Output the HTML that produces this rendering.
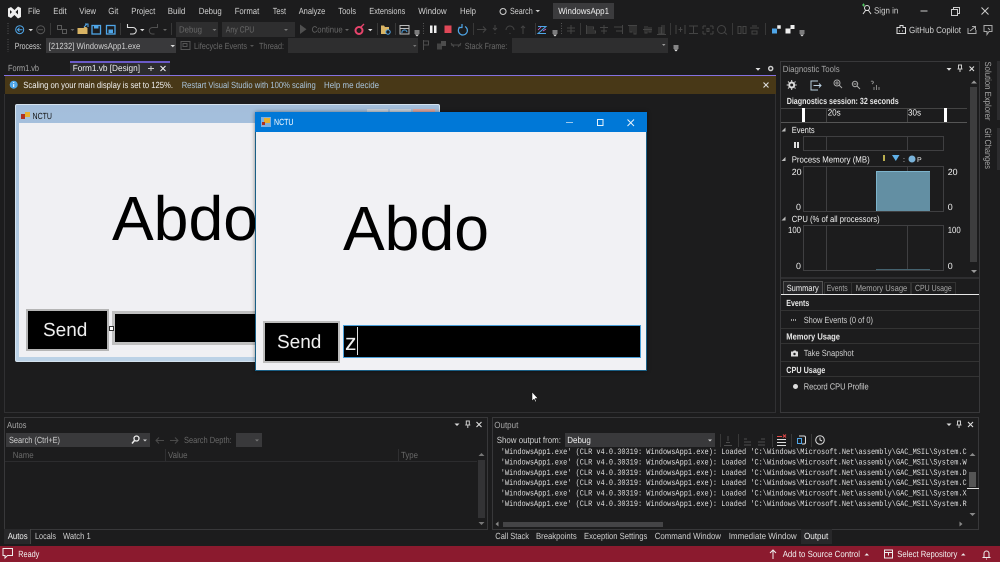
<!DOCTYPE html>
<html><head><meta charset="utf-8"><style>
html,body{margin:0;padding:0;background:#1b1b1c}
#r{position:relative;width:1000px;height:562px;overflow:hidden;background:#1c1c1d;font-family:"Liberation Sans",sans-serif;color:#d8d8d8;text-rendering:geometricPrecision}
.t{position:absolute;white-space:nowrap}
.b{position:absolute;box-sizing:border-box}
svg{position:absolute;left:0;top:0}
svg text{font-family:"Liberation Sans",sans-serif;font-size:8.9px;fill:#cfcfcf;text-rendering:geometricPrecision}
svg text.d{fill:#686868}
svg text.g{fill:#a6a6a6}
svg text.w{fill:#f0f0f0}
svg text.h{font-weight:bold;fill:#e6e6e6}
svg text.o{font-family:"Liberation Mono",monospace;font-size:8.2px;fill:#dedede}
</style></head><body><div id="r">
<!-- boxes -->
<div class="b" style="left:46px;top:38px;width:130px;height:15px;background:#39393b"></div>
<div class="b" style="left:176px;top:22px;width:42px;height:15px;background:#2e2e2f"></div>
<div class="b" style="left:222px;top:22px;width:73px;height:15px;background:#2e2e2f"></div>
<div class="b" style="left:288px;top:38px;width:130px;height:15px;background:#2e2e2f"></div>
<div class="b" style="left:512px;top:38px;width:156px;height:15px;background:#2e2e2f"></div>
<div class="b" style="left:553px;top:3px;width:61px;height:16px;background:#3b3b3d"></div>
<!-- doc area -->
<div class="b" style="left:4px;top:94px;width:772px;height:319px;border:1px solid #303032;border-top:0"></div>
<div class="b" style="left:70px;top:61px;width:100px;height:14px;background:#2c2c2f;border-top:2px solid #6a5ac8"></div>
<div class="b" style="left:4px;top:75px;width:772px;height:1px;background:#8672e0"></div>
<div class="b" style="left:5px;top:76px;width:771px;height:18px;background:#483817"></div>
<!-- back form -->
<div class="b" style="left:15px;top:104px;width:425px;height:258px;background:linear-gradient(#a3bedb,#bcd2e6);border:1px solid #d5e3ef;border-radius:2px"></div>
<div class="b" style="left:367px;top:109px;width:21px;height:5px;background:#c9d2dc"></div>
<div class="b" style="left:390px;top:109px;width:21px;height:5px;background:#c9d2dc"></div>
<div class="b" style="left:413px;top:109px;width:22px;height:5px;background:#e0a8a0"></div>
<div class="b" style="left:21px;top:114px;width:4px;height:5px;background:#b03020"></div>
<div class="b" style="left:25px;top:112px;width:5px;height:5px;background:#e8b030"></div>
<div class="b" style="left:19px;top:123px;width:240px;height:234px;background:#f0f0f3"></div>
<span class="t" style="left:112px;top:181px;font-size:62.500px;line-height:76px;color:#000">Abdo</span>
<div class="b" style="left:26px;top:309px;width:83px;height:42px;background:#000;border:2px solid #b5b5b5"></div>
<span class="t" style="left:43px;top:319px;font-size:19px;line-height:24px;color:#eee">Send</span>
<div class="b" style="left:112px;top:311px;width:150px;height:34px;background:#000;border:3px solid #c0c0c0"></div>
<div class="b" style="left:109px;top:326px;width:5px;height:5px;background:#fff;border:1px solid #333"></div>
<!-- front form -->
<div class="b" style="left:255px;top:112px;width:392px;height:259px;background:#f1f1f4;border:1px solid #1a5f85;border-top:0;box-shadow:0 0 4px rgba(0,0,0,.45)"></div>
<div class="b" style="left:255px;top:112px;width:392px;height:20px;background:#0078d7"></div>
<div class="b" style="left:261px;top:117px;width:10px;height:10px;background:#7fb0e0"></div>
<div class="b" style="left:264px;top:118px;width:6px;height:5px;background:#e8b030"></div>
<div class="b" style="left:262px;top:122px;width:3px;height:3px;background:#b03020"></div>
<span class="t" style="left:343px;top:191px;font-size:62.500px;line-height:76px;color:#000">Abdo</span>
<div class="b" style="left:263px;top:321px;width:77px;height:42px;background:#000;border:2px solid #bdbdbd"></div>
<span class="t" style="left:277px;top:331px;font-size:19px;line-height:24px;color:#eee">Send</span>
<div class="b" style="left:343px;top:325px;width:298px;height:33px;background:#000;border:1px solid #4a9fd8"></div>
<span class="t" style="left:345px;top:330px;font-size:23px;line-height:24px;color:#eee">z</span>
<div class="b" style="left:357px;top:327px;width:1px;height:28px;background:#ddd"></div>
<!-- Diagnostic -->
<div class="b" style="left:780px;top:61px;width:200px;height:352px;border:1px solid #38383a"></div>
<div class="b" style="left:781px;top:108px;width:186px;height:1px;background:#444"></div>
<div class="b" style="left:781px;top:122px;width:186px;height:1px;background:#555"></div>
<div class="b" style="left:826px;top:109px;width:1px;height:13px;background:#444"></div>
<div class="b" style="left:907px;top:109px;width:1px;height:13px;background:#444"></div>
<div class="b" style="left:802px;top:108px;width:3px;height:14px;background:#fff"></div>
<div class="b" style="left:944px;top:108px;width:3px;height:14px;background:#fff"></div>
<div class="b" style="left:803px;top:136px;width:141px;height:15px;border:1px solid #3f3f41"></div>
<div class="b" style="left:826px;top:136px;width:1px;height:15px;background:#3f3f41"></div>
<div class="b" style="left:907px;top:136px;width:1px;height:15px;background:#3f3f41"></div>
<div class="b" style="left:794px;top:142px;width:2px;height:6px;background:#ddd"></div>
<div class="b" style="left:797px;top:142px;width:2px;height:6px;background:#ddd"></div>
<div class="b" style="left:803px;top:166px;width:141px;height:46px;border:1px solid #3f3f41"></div>
<div class="b" style="left:826px;top:167px;width:1px;height:45px;background:#3f3f41"></div>
<div class="b" style="left:907px;top:167px;width:1px;height:4px;background:#3f3f41"></div>
<div class="b" style="left:876px;top:171px;width:54px;height:40px;background:#638fa3;border-top:1px solid #7db4cc;border-left:1px solid #7db4cc"></div>
<div class="b" style="left:803px;top:225px;width:141px;height:46px;border:1px solid #3f3f41"></div>
<div class="b" style="left:826px;top:226px;width:1px;height:45px;background:#3f3f41"></div>
<div class="b" style="left:907px;top:226px;width:1px;height:45px;background:#3f3f41"></div>
<div class="b" style="left:876px;top:269px;width:54px;height:1px;background:#44626f"></div>
<div class="b" style="left:970px;top:87px;width:7px;height:175px;background:#3d3d3e"></div>
<div class="b" style="left:781px;top:277px;width:198px;height:2px;background:#2e2e30"></div>
<div class="b" style="left:783px;top:281px;width:40px;height:13px;background:#262628;border:1px solid #555;border-bottom:0"></div>
<div class="b" style="left:824px;top:282px;width:28px;height:12px;border:1px solid #333;border-bottom:0"></div>
<div class="b" style="left:851px;top:282px;width:60px;height:12px;border:1px solid #333;border-bottom:0"></div>
<div class="b" style="left:911px;top:282px;width:45px;height:12px;border:1px solid #333;border-bottom:0"></div>
<div class="b" style="left:781px;top:294px;width:198px;height:1px;background:#e8e8e8"></div>
<div class="b" style="left:781px;top:310px;width:198px;height:1px;background:#333"></div>
<div class="b" style="left:781px;top:328px;width:198px;height:1px;background:#333"></div>
<div class="b" style="left:781px;top:343px;width:198px;height:1px;background:#333"></div>
<div class="b" style="left:781px;top:361px;width:198px;height:1px;background:#333"></div>
<div class="b" style="left:781px;top:376px;width:198px;height:1px;background:#333"></div>
<div class="b" style="left:793px;top:384px;width:5px;height:5px;border-radius:50%;background:#ddd"></div>
<div class="b" style="left:997px;top:61px;width:3px;height:59px;background:#2c2c2e"></div>
<div class="b" style="left:997px;top:128px;width:3px;height:42px;background:#2c2c2e"></div>
<!-- Autos -->
<div class="b" style="left:4px;top:417px;width:484px;height:113px;border:1px solid #38383a"></div>
<div class="b" style="left:6px;top:433px;width:144px;height:14px;background:#39393b"></div>
<div class="b" style="left:236px;top:433px;width:26px;height:14px;background:#39393b"></div>
<div class="b" style="left:5px;top:461px;width:472px;height:1px;background:#2c2c2e"></div>
<div class="b" style="left:165px;top:449px;width:1px;height:12px;background:#2f2f31"></div>
<div class="b" style="left:398px;top:449px;width:1px;height:12px;background:#2f2f31"></div>
<div class="b" style="left:478px;top:460px;width:7px;height:58px;background:#333335"></div>
<div class="b" style="left:4px;top:529px;width:27px;height:15px;background:#28282a;border-right:1px solid #444"></div>
<!-- Output -->
<div class="b" style="left:492px;top:417px;width:487px;height:113px;border:1px solid #38383a"></div>
<div class="b" style="left:565px;top:433px;width:150px;height:14px;background:#39393b"></div>
<div class="b" style="left:969px;top:472px;width:7px;height:15px;background:#555"></div>
<div class="b" style="left:967px;top:488px;width:12px;height:1px;background:#ddd"></div>
<div class="b" style="left:503px;top:522px;width:160px;height:5px;background:#444446"></div>
<div class="b" style="left:801px;top:529px;width:31px;height:15px;background:#28282a"></div>
<!-- Status -->
<div class="b" style="left:0;top:546px;width:1000px;height:16px;background:#8b1a2e"></div>

<svg width="1000" height="562" viewBox="0 0 1000 562" fill="none">
<!-- TEXT -->
<g>
<text x="28" y="14" textLength="12" lengthAdjust="spacingAndGlyphs">File</text>
<text x="53.300" y="14" textLength="13.400" lengthAdjust="spacingAndGlyphs">Edit</text>
<text x="79.300" y="14" textLength="16.700" lengthAdjust="spacingAndGlyphs">View</text>
<text x="108.300" y="14" textLength="10" lengthAdjust="spacingAndGlyphs">Git</text>
<text x="131.300" y="14" textLength="24" lengthAdjust="spacingAndGlyphs">Project</text>
<text x="167.700" y="14" textLength="17.600" lengthAdjust="spacingAndGlyphs">Build</text>
<text x="198.700" y="14" textLength="23" lengthAdjust="spacingAndGlyphs">Debug</text>
<text x="234.700" y="14" textLength="24.600" lengthAdjust="spacingAndGlyphs">Format</text>
<text x="272.700" y="14" textLength="13.300" lengthAdjust="spacingAndGlyphs">Test</text>
<text x="298.700" y="14" textLength="26.600" lengthAdjust="spacingAndGlyphs">Analyze</text>
<text x="338.300" y="14" textLength="17.700" lengthAdjust="spacingAndGlyphs">Tools</text>
<text x="369.300" y="14" textLength="36" lengthAdjust="spacingAndGlyphs">Extensions</text>
<text x="418.300" y="14" textLength="28.400" lengthAdjust="spacingAndGlyphs">Window</text>
<text x="460" y="14" textLength="16" lengthAdjust="spacingAndGlyphs">Help</text>
<text x="510" y="14" textLength="22.700" lengthAdjust="spacingAndGlyphs">Search</text>
<text class="w" x="558.300" y="14" textLength="50.700" lengthAdjust="spacingAndGlyphs">WindowsApp1</text>
<text x="874" y="13.500" textLength="24.300" lengthAdjust="spacingAndGlyphs">Sign in</text>
<text x="909" y="33" textLength="52" lengthAdjust="spacingAndGlyphs">GitHub Copilot</text>
<text class="d" x="179" y="32.500" textLength="23" lengthAdjust="spacingAndGlyphs">Debug</text>
<text class="d" x="225.700" y="32.500" textLength="28.600" lengthAdjust="spacingAndGlyphs">Any CPU</text>
<text class="d" x="311.700" y="32.500" textLength="31" lengthAdjust="spacingAndGlyphs">Continue</text>
<text x="14.700" y="49" textLength="27" lengthAdjust="spacingAndGlyphs">Process:</text>
<text x="48.700" y="49" textLength="91.600" lengthAdjust="spacingAndGlyphs">[21232] WindowsApp1.exe</text>
<text class="d" x="194" y="49" textLength="53" lengthAdjust="spacingAndGlyphs">Lifecycle Events</text>
<text class="d" x="259" y="49" textLength="25" lengthAdjust="spacingAndGlyphs">Thread:</text>
<text class="d" x="464.700" y="49" textLength="42.600" lengthAdjust="spacingAndGlyphs">Stack Frame:</text>
<text class="g" x="8" y="71" textLength="31" lengthAdjust="spacingAndGlyphs">Form1.vb</text>
<text class="w" x="72.700" y="71" textLength="67.300" lengthAdjust="spacingAndGlyphs">Form1.vb [Design]</text>
<text class="w" x="23.300" y="88" textLength="149.700" lengthAdjust="spacingAndGlyphs">Scaling on your main display is set to 125%.</text>
<text x="181.700" y="88" textLength="134" lengthAdjust="spacingAndGlyphs" style="fill:#a9c4dc">Restart Visual Studio with 100% scaling</text>
<text x="324" y="88" textLength="55" lengthAdjust="spacingAndGlyphs" style="fill:#a9c4dc">Help me decide</text>
<text x="32.500" y="119" textLength="19.500" lengthAdjust="spacingAndGlyphs" style="fill:#111">NCTU</text>
<text x="274" y="125" textLength="19.500" lengthAdjust="spacingAndGlyphs" style="fill:#fff">NCTU</text>
<text class="g" x="782.700" y="72" textLength="57" lengthAdjust="spacingAndGlyphs">Diagnostic Tools</text>
<text class="h" x="786.700" y="104" textLength="112" lengthAdjust="spacingAndGlyphs">Diagnostics session: 32 seconds</text>
<text class="w" x="827.700" y="115.500" textLength="13" lengthAdjust="spacingAndGlyphs">20s</text>
<text class="w" x="908" y="115.500" textLength="13" lengthAdjust="spacingAndGlyphs">30s</text>
<text class="w" x="791.700" y="133" textLength="23" lengthAdjust="spacingAndGlyphs">Events</text>
<text class="w" x="791.700" y="162.300" textLength="78" lengthAdjust="spacingAndGlyphs">Process Memory (MB)</text>
<text class="w" x="903" y="162" style="font-size:7px">:</text>
<text class="w" x="917" y="162" style="font-size:7px">P</text>
<text class="w" x="791.700" y="175">20</text>
<text class="w" x="947.700" y="175">20</text>
<text class="w" x="796" y="210">0</text>
<text class="w" x="947.700" y="210">0</text>
<text class="w" x="791.700" y="222" textLength="88" lengthAdjust="spacingAndGlyphs">CPU (% of all processors)</text>
<text class="w" x="788" y="233" textLength="13" lengthAdjust="spacingAndGlyphs">100</text>
<text class="w" x="947.700" y="233" textLength="13" lengthAdjust="spacingAndGlyphs">100</text>
<text class="w" x="796" y="269">0</text>
<text class="w" x="947.700" y="269">0</text>
<text class="w" x="786.700" y="291" textLength="32" lengthAdjust="spacingAndGlyphs">Summary</text>
<text class="g" x="826.700" y="291" textLength="21" lengthAdjust="spacingAndGlyphs">Events</text>
<text class="g" x="855.700" y="291" textLength="51.600" lengthAdjust="spacingAndGlyphs">Memory Usage</text>
<text class="g" x="915" y="291" textLength="36.700" lengthAdjust="spacingAndGlyphs">CPU Usage</text>
<text class="h" x="786.300" y="306" textLength="23" lengthAdjust="spacingAndGlyphs">Events</text>
<text x="803.700" y="323" textLength="69.300" lengthAdjust="spacingAndGlyphs">Show Events (0 of 0)</text>
<text class="h" x="786.300" y="339.500" textLength="53.700" lengthAdjust="spacingAndGlyphs">Memory Usage</text>
<text x="803.700" y="356" textLength="50" lengthAdjust="spacingAndGlyphs">Take Snapshot</text>
<text class="h" x="786.300" y="373" textLength="39" lengthAdjust="spacingAndGlyphs">CPU Usage</text>
<text x="803.700" y="389.500" textLength="65" lengthAdjust="spacingAndGlyphs">Record CPU Profile</text>
<text class="g" transform="translate(985 61.500) rotate(90)" textLength="59" lengthAdjust="spacingAndGlyphs">Solution Explorer</text>
<text class="g" transform="translate(985 128) rotate(90)" textLength="41" lengthAdjust="spacingAndGlyphs">Git Changes</text>
<text class="g" x="7" y="428" textLength="19.500" lengthAdjust="spacingAndGlyphs">Autos</text>
<text x="9" y="443" textLength="51" lengthAdjust="spacingAndGlyphs">Search (Ctrl+E)</text>
<text class="d" x="184" y="443" textLength="47.700" lengthAdjust="spacingAndGlyphs">Search Depth:</text>
<text class="d" x="12.700" y="458" textLength="21" lengthAdjust="spacingAndGlyphs">Name</text>
<text class="d" x="168" y="458" textLength="19.500" lengthAdjust="spacingAndGlyphs">Value</text>
<text class="d" x="401" y="458" textLength="17" lengthAdjust="spacingAndGlyphs">Type</text>
<text class="w" x="7.700" y="539" textLength="20" lengthAdjust="spacingAndGlyphs">Autos</text>
<text x="35" y="539" textLength="21" lengthAdjust="spacingAndGlyphs">Locals</text>
<text x="63" y="539" textLength="27.700" lengthAdjust="spacingAndGlyphs">Watch 1</text>
<text class="g" x="494.300" y="428" textLength="24" lengthAdjust="spacingAndGlyphs">Output</text>
<text x="496.700" y="443" textLength="64.300" lengthAdjust="spacingAndGlyphs">Show output from:</text>
<text class="w" x="567.300" y="443" textLength="23.500" lengthAdjust="spacingAndGlyphs">Debug</text>
<text class="o" x="500.700" y="454" textLength="466" lengthAdjust="spacingAndGlyphs">'WindowsApp1.exe' (CLR v4.0.30319: WindowsApp1.exe): Loaded 'C:\Windows\Microsoft.Net\assembly\GAC_MSIL\System.C</text>
<text class="o" x="500.700" y="464.400" textLength="466" lengthAdjust="spacingAndGlyphs">'WindowsApp1.exe' (CLR v4.0.30319: WindowsApp1.exe): Loaded 'C:\Windows\Microsoft.Net\assembly\GAC_MSIL\System.W</text>
<text class="o" x="500.700" y="474.800" textLength="466" lengthAdjust="spacingAndGlyphs">'WindowsApp1.exe' (CLR v4.0.30319: WindowsApp1.exe): Loaded 'C:\Windows\Microsoft.Net\assembly\GAC_MSIL\System.D</text>
<text class="o" x="500.700" y="485.200" textLength="466" lengthAdjust="spacingAndGlyphs">'WindowsApp1.exe' (CLR v4.0.30319: WindowsApp1.exe): Loaded 'C:\Windows\Microsoft.Net\assembly\GAC_MSIL\System.C</text>
<text class="o" x="500.700" y="495.600" textLength="466" lengthAdjust="spacingAndGlyphs">'WindowsApp1.exe' (CLR v4.0.30319: WindowsApp1.exe): Loaded 'C:\Windows\Microsoft.Net\assembly\GAC_MSIL\System.X</text>
<text class="o" x="500.700" y="506" textLength="466" lengthAdjust="spacingAndGlyphs">'WindowsApp1.exe' (CLR v4.0.30319: WindowsApp1.exe): Loaded 'C:\Windows\Microsoft.Net\assembly\GAC_MSIL\System.R</text>
<text x="495.300" y="539" textLength="33.700" lengthAdjust="spacingAndGlyphs">Call Stack</text>
<text x="536" y="539" textLength="40.700" lengthAdjust="spacingAndGlyphs">Breakpoints</text>
<text x="584" y="539" textLength="63.300" lengthAdjust="spacingAndGlyphs">Exception Settings</text>
<text x="654.700" y="539" textLength="66.300" lengthAdjust="spacingAndGlyphs">Command Window</text>
<text x="728.700" y="539" textLength="68" lengthAdjust="spacingAndGlyphs">Immediate Window</text>
<text class="w" x="804" y="539" textLength="24.300" lengthAdjust="spacingAndGlyphs">Output</text>
<text class="w" x="18.300" y="557" textLength="21" lengthAdjust="spacingAndGlyphs">Ready</text>
<text class="w" x="782.700" y="557" textLength="77.300" lengthAdjust="spacingAndGlyphs">Add to Source Control</text>
<text class="w" x="897.300" y="557" textLength="60" lengthAdjust="spacingAndGlyphs">Select Repository</text>
</g>
<!-- VS logo -->
<path d="M8 8.500l3-1.500 3.500 3 3.500-3.500 3 1.500v9l-3 1.500-3.500-3.500-3.500 3-3-1.500z" fill="#eee"/><path d="M10 10v4l2-2zM15.500 12l2.500 2.500v-5z" fill="#1b1b1c"/>
<path d="M503 8.500a3 3 0 10.100 0" stroke="#ccc"/><path d="M535.500 10h4.500l-2.200 2.200z" fill="#ccc"/>
<!-- grips -->
<path d="M8 23v12M8 39v13M423.500 23v12M561.500 23v12" stroke="#555" stroke-dasharray="1 1.500"/>
<!-- separators -->
<path d="M50.500 23v12M120.500 23v12M171.500 23v12M377.500 23v12M395.500 23v12M473.500 23v12M535.500 23v12M580.500 23v12M670.500 23v12M732.500 23v12M765.500 23v12" stroke="#383838"/>
<!-- title controls -->
<path d="M920.500 11h7" stroke="#ccc"/><rect x="951.500" y="9.500" width="6" height="6" stroke="#ccc"/><path d="M953.500 9.500v-2h6v6h-2" stroke="#ccc"/>
<path d="M981.500 7.500l7 7M988.500 7.500l-7 7" stroke="#ccc"/>
<circle cx="867" cy="8" r="2.500" stroke="#ddd"/><path d="M863 14l2.500-3.500h3L871 14" stroke="#ddd"/><path d="M862 5h3M863.500 3.500v3" stroke="#4fc060"/>
<!-- toolbar 1 -->
<circle cx="19.700" cy="29.700" r="4" stroke="#4fa6e8"/><path d="M22.500 29.700h-5M19.500 27.700l-2 2 2 2" stroke="#4fa6e8"/>
<path d="M28.500 29h4.500l-2.200 2.200z" fill="#ddd"/><circle cx="40.700" cy="29.700" r="4" stroke="#555"/><path d="M38 29.700h5" stroke="#555"/>
<rect x="57.500" y="25.500" width="4" height="4" stroke="#5a5a5a"/><rect x="62.500" y="29.500" width="4" height="4" stroke="#5a5a5a"/><path d="M70.500 29h4l-2 2z" fill="#666"/>
<path d="M77.500 28h6l1-1h1.500l1.500 1v6h-10z" fill="#d9b464"/><path d="M84 27l3-3M85 24h3v3" stroke="#4fa6e8"/>
<rect x="92" y="25.500" width="8.500" height="8.500" stroke="#4fa6e8" stroke-width="1.300"/><rect x="94" y="25.500" width="4.500" height="3" fill="#4fa6e8"/>
<rect x="106.500" y="25.500" width="8.500" height="8.500" stroke="#4fa6e8" stroke-width="1.300"/><rect x="108.500" y="29.500" width="4.500" height="3.500" fill="#4fa6e8"/>
<path d="M127.500 27.500h5.500a3 3 0 010 6.500h-3M127.500 24v3.500h3.500" stroke="#ddd" stroke-width="1.100"/><path d="M140 29h4.500l-2.200 2.200z" fill="#ddd"/>
<path d="M157.500 27.500h-5a3 3 0 000 6.500h2M157.500 24v3.500h-3" stroke="#505050"/><path d="M163 29h4l-2 2z" fill="#666"/>
<path d="M214.500 29h4l-2 2z" fill="#777" transform="translate(-2)"/><path d="M284 29h4l-2 2z" fill="#777"/>
<path d="M300 24.500v9.500l6.500-4.700z" fill="#4f4f4f"/><path d="M345 29h4l-2 2z" fill="#666"/>
<circle cx="359" cy="30.500" r="3.500" stroke="#e8446c" stroke-width="2"/><path d="M361 27l3-3" stroke="#e8446c" stroke-width="1.300"/>
<path d="M368 29h4.500l-2.200 2.200z" fill="#ddd"/>
<path d="M381 25.500h3l1 1.500h4v7h-8z" fill="#d9b464"/><circle cx="388" cy="32" r="2.200" fill="#1b1b1c" stroke="#4fa6e8"/>
<rect x="400" y="25.500" width="9" height="8.500" stroke="#bbb"/><path d="M400 28.500h9" stroke="#bbb"/><path d="M402 33a2.500 2.500 0 015-1" stroke="#4fa6e8"/>
<path d="M414.500 31h5M414.500 33h5" stroke="#ddd"/><path d="M415 34.500h4l-2 2z" fill="#ddd"/>
<rect x="430" y="25.500" width="2.500" height="7.500" fill="#eee"/><rect x="434" y="25.500" width="2.500" height="7.500" fill="#eee"/>
<rect x="444.500" y="25.500" width="7" height="7.500" fill="#e04858"/>
<path d="M465 26.500a4.500 4.500 0 11-5 .5M462 24v3.500h-3.500" stroke="#4fa6e8" stroke-width="1.200"/>
<path d="M477 29.500h9M483 26.500l3 3-3 3M495 25v5M493 28l2 2 2-2M495 33v1" stroke="#444"/>
<path d="M506 30a4 4 0 018 0M510 33v1M523 34v-8M521 28l2-2 2 2" stroke="#444"/>
<path d="M538 26.500h8l-8 7h8" stroke="#4fa6e8"/><path d="M538 30l3-3M543 31l3-2" stroke="#d060d0" stroke-width=".8"/>
<path d="M552.500 31h5M552.500 33h5" stroke="#ddd"/><path d="M553 34.500h4l-2 2z" fill="#ddd"/>
<path d="M571 25v9M567 28h8M567 31h8" stroke="#444"/>
<path d="M586.500 25v9M586.500 27h7v2h-7M586.500 31h9v2h-9M604 25v9M600 27.500h8M601 31h6M622.500 25v9M614 27h8M616 31h6" stroke="#444"/>
<path d="M628 25.500h9M630 26v6h2v-6M634 26v8h2v-8M643 29.500h9M645 26v7h2v-7M649 27v5h2v-5M657 34.500h9M659 27v7h2v-7M662 25v9h2v-9" stroke="#444"/>
<path d="M676 25v9M685 25v9M680.500 27v5M678.500 29.500h4M689 26h9M689 33.500h9M693.500 26v7.500M703 26h3M703 26v3M713 26h-3M713 26v3M703 34h3M703 34v-3M713 34h-3M713 34v-3M707 28.500h2v3h-2z" stroke="#444"/>
<circle cx="721.500" cy="29.500" r="4" stroke="#444"/><path d="M724 32l3 2.500" stroke="#444"/>
<path d="M738 26.500h3v7h-3zM743 26.500h3v7h-3zM750 28h9M752 31h5v3h-5zM752 26h5" stroke="#444"/>
<rect x="772" y="28.500" width="5" height="5" fill="#4fa6e8"/><rect x="777" y="25" width="4" height="4" fill="#eee" stroke="#1b1b1c" stroke-width=".5"/>
<rect x="785.500" y="28.500" width="5" height="5" fill="#eee"/><rect x="790.500" y="25" width="4" height="4" fill="#eee"/>
<path d="M799.500 31h5M799.500 33h5" stroke="#ddd"/><path d="M800 34.500h4l-2 2z" fill="#ddd"/>
<path d="M897 27.500h3v-2h3v2h2.500v6h-8.500zM899 31h1M902 31h1" stroke="#ddd"/>
<path d="M968 28v5.500h8V30M970 31l5-4M972 26.500h3.500V30" stroke="#aaa"/>
<path d="M984 25.500h8v6h-3l-2 3v-3h-3z" stroke="#aaa"/><path d="M988 28l2 2" stroke="#aaa"/>
<!-- toolbar 2 -->
<path d="M170.500 45h4.500l-2.200 2.200z" fill="#ddd"/>
<rect x="181" y="41.500" width="9" height="8" stroke="#555"/><rect x="183" y="43.500" width="4" height="3" stroke="#555"/><path d="M250 45h4l-2 2z" fill="#555"/>
<path d="M413 45h3.500l-1.700 2z" fill="#777"/>
<path d="M423.500 40v10M423.500 41h5v4h-5" stroke="#4d4d4d"/><rect x="437" y="43.500" width="5" height="6" fill="#444"/><rect x="441" y="41" width="5" height="5" fill="#4d4d4d"/>
<path d="M451 45h10M451 43l3 4M461 43l-3 4" stroke="#4d4d4d"/>
<path d="M662 44h3.500l-1.700 2z" fill="#999"/>
<path d="M673.500 46h5M673.500 48h5" stroke="#eee"/><path d="M674 49.500h4l-2 2z" fill="#eee"/>
<!-- tab glyphs -->
<path d="M148 68.500h3M151 66v5M151 68.500h3" stroke="#ccc"/><path d="M160.500 66l5 5M165.500 66l-5 5" stroke="#eee" stroke-width="1.100"/>
<circle cx="13.700" cy="84.700" r="4" fill="#4fa6e8"/><rect x="13.200" y="84" width="1" height="3" fill="#fff"/><rect x="13.200" y="82" width="1" height="1" fill="#fff"/>
<path d="M763.500 82.500l5 5M768.500 82.500l-5 5" stroke="#ddd" stroke-width="1.100"/>
<path d="M755.500 68h5l-2.500 2.700z" fill="#ddd"/><circle cx="770.700" cy="68.500" r="2" stroke="#ccc" stroke-width="1.500"/>
<!-- form controls -->
<path d="M566 122.500h7" stroke="#9cc8ec"/><rect x="597.500" y="119.500" width="5.500" height="6" stroke="#e8f2fb"/>
<path d="M627.500 119.500l6.500 6.500M634 119.500l-6.500 6.500" stroke="#e8f2fb"/>
<!-- diag header -->
<path d="M946.500 68h5l-2.500 2.700z" fill="#ddd"/><path d="M958.500 65v4h3v-4zM957.500 69h5M960 69v3" stroke="#ccc"/>
<path d="M969.500 66.500l4.500 4.500M974 66.500l-4.500 4.500" stroke="#ddd" stroke-width="1.100"/>
<circle cx="791.700" cy="85" r="2.500" stroke="#ddd" stroke-width="2"/><path d="M791.700 80v1.500M791.700 88.500V90M786.700 85h1.500M795.200 85h1.500M788 81.500l1 1M795.500 88.500l-1-1M795.500 81.500l-1 1M788 88.500l1-1" stroke="#ddd"/>
<path d="M818 81h-7v9h7M813.500 85.500h7M819 83.500l2 2-2 2" stroke="#b9cfe0"/>
<path d="M835 83h4M837 81v4" stroke="#999"/><circle cx="837" cy="83" r="3" stroke="#aaa"/><path d="M839 85l3 3" stroke="#aaa"/>
<circle cx="855" cy="84" r="2.700" stroke="#aaa"/><path d="M857 86l3 3M853.500 84h3" stroke="#aaa"/>
<path d="M871 81.500a1.500 1.500 0 012.500 1l-1.500 1.500M874 90v-3M876.500 90v-5M879 90v-3" stroke="#888"/>
<path d="M785.500 127.500v4h-4zM785.500 157v4h-4zM785.500 216.500v4h-4z" fill="#bbb"/>
<path d="M884 155v6" stroke="#f0e060" stroke-width="1.500"/><path d="M892 155h7.500l-3.700 6z" fill="#5fb0e8"/><circle cx="912" cy="159" r="3.500" fill="#79b2d8"/>
<path d="M971 83.500l3-3 3 3zM971 270l3 3 3-3z" fill="#999"/>
<path d="M791 320h5" stroke="#999" stroke-dasharray="1 1" stroke-width="2"/>
<path d="M791 351.500h2l.8-1h2l.8 1h1.400v5h-7z" fill="#ddd"/><circle cx="794.500" cy="354" r="1.200" fill="#222"/>
<!-- Autos icons -->
<circle cx="136.500" cy="438.500" r="2.500" stroke="#eee" stroke-width="1.300"/><path d="M134.500 440.500l-2.500 3" stroke="#eee" stroke-width="1.500"/>
<path d="M143 439.500h4l-2 2z" fill="#ccc"/>
<path d="M164 440.500h-8M159 437.500l-3 3 3 3M170 440.500h8M175 437.500l3 3-3 3" stroke="#4a4a4a"/>
<path d="M255 439.500h4l-2 2z" fill="#777"/>
<path d="M454.500 423.500h5l-2.500 2.500z" fill="#ddd"/><path d="M466.300 421v4h3v-4zM465.300 425h5M467.800 425v3" stroke="#ccc"/><path d="M476.500 422l5 5M481.500 422l-5 5" stroke="#ddd" stroke-width="1.100"/>
<path d="M478.500 456l3-3 3 3zM478.500 522l3 3 3-3z" fill="#777"/>
<!-- Output icons -->
<path d="M946.500 423.500h5l-2.500 2.500z" fill="#ddd"/><path d="M957.500 421v4h3v-4zM956.500 425h5M959 425v3" stroke="#ccc"/><path d="M968 422l5 5M973 422l-5 5" stroke="#ddd" stroke-width="1.100"/>
<path d="M708 439.500h4l-2 2z" fill="#ccc"/>
<path d="M720.500 434v13M738.500 434v13M772.500 434v13M791.500 434v13M811.500 434v13" stroke="#383838"/>
<path d="M724 445.500h8M726 442.500h4M728 436v5M744 445h7M744 442h7M744 439h3M758 445h7M758 442h7M761 439h4" stroke="#4d4d4d"/>
<path d="M777 439.500h9M777 442.500h9M777 445.500h9" stroke="#ddd"/><path d="M777 436.500h5M783 434.500l3 3M786 434.500l-3 3" stroke="#e04848"/>
<rect x="797.500" y="438.500" width="4" height="5" stroke="#4fa6e8"/><path d="M799 436h5a1.500 1.500 0 011.500 1.500v5a1.500 1.500 0 01-1.500 1.500h-2" stroke="#ddd"/>
<circle cx="820" cy="440" r="4.300" stroke="#ddd"/><path d="M820 437.500v2.500l2 1" stroke="#ddd"/>
<path d="M969.500 456l3-3 3 3zM969.500 513l3 3 3-3zM495.500 524l3-2.500v5zM959.500 521.500l3 2.500-3 2.500z" fill="#888"/>
<!-- Status icons -->
<path d="M3 548.500h9.500v7H7.500l-2.500 2.500v-2.500H3z" stroke="#eee"/>
<path d="M773 559v-9M770 553l3-3 3 3" stroke="#eee"/><path d="M864.500 555.500h4.500l-2.200-2.200zM961 555.500h4.500l-2.200-2.200z" fill="#eee"/>
<rect x="884.500" y="550" width="8" height="8" stroke="#eee"/><path d="M884.500 552.500h8M888.500 552.500v3" stroke="#eee"/>
<path d="M982.500 557.500h8M984 557v-3.500a2.500 2.500 0 015 0v3.500M986.500 558.500v1" stroke="#eee"/>
<!-- cursor -->
<path d="M532 392v9l2-2 1.500 3 1-.5-1.500-3h3z" fill="#fff" stroke="#000" stroke-width=".5"/>
</svg>
</div></body></html>
